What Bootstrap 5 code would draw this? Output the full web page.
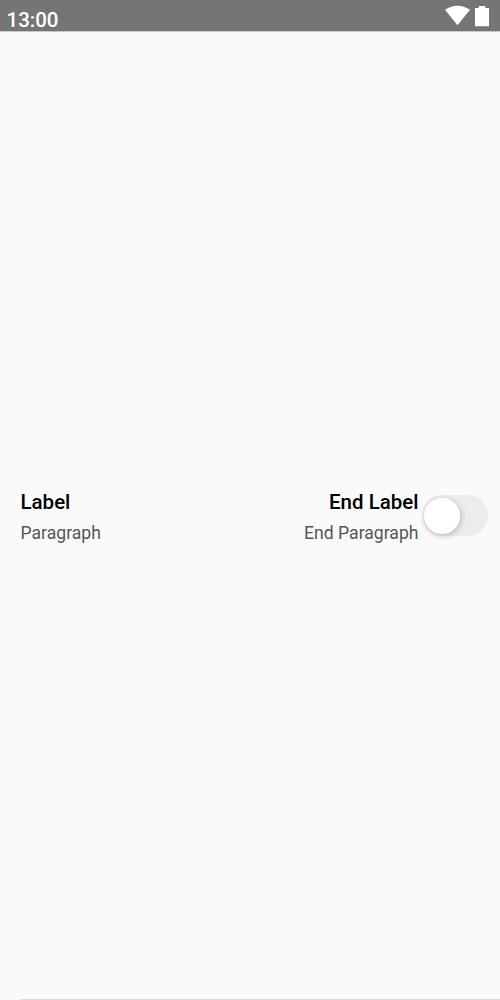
<!DOCTYPE html>
<html lang="en">
<head>
<meta charset="utf-8">
<meta name="viewport" content="width=device-width, initial-scale=1">
<title>List item</title>
<link href="https://cdn.jsdelivr.net/npm/bootstrap@5.3.0/dist/css/bootstrap.min.css" rel="stylesheet">
<style>
body{font-family:Roboto,sans-serif;background:#fafafa;color:#000}
.status-bar{height:31px;background:#757575;color:#fff;padding:8px 10px 0 6.5px;box-shadow:0 1px 0 #c8c8c8}
.status-icons{margin-top:-3px}
.clock{font-size:20.5px;line-height:24px;font-weight:500}
.item{padding:0 12.5px 0 20.5px}
.item-copy{padding-top:2px}
.item-title{font-size:20.5px;line-height:28px;font-weight:500}
.item-text{font-size:17.6px;line-height:24px;color:#555;margin-top:5px}
.toggle{width:66px;height:41px;border-radius:21px;background:#ececec;padding:3px 2.4px;margin-left:3px}
.knob{width:36px;height:36px;border-radius:50%;background:#fff;box-shadow:1px 2px 6px rgba(0,0,0,.22)}
.divider{height:1px;margin-left:20px;background:#dcdcdc}
</style>
</head>
<body class="vh-100 d-flex flex-column overflow-hidden">
<header class="status-bar d-flex justify-content-between flex-shrink-0">
<span class="clock">13:00</span>
<svg class="status-icons" width="46" height="22" viewBox="444 5 46 22" fill="#fff"><path d="M445 9.700Q457.500 1.800 470 9.700L457.500 25.300Z"/><path d="M475 8h3.800V6h6.400v2h3.800v18.300h-14z"/></svg>
</header>
<main class="flex-grow-1 d-flex align-items-center">
<div class="item w-100 d-flex align-items-center justify-content-between">
<div class="item-copy"><div class="item-title">Label</div><div class="item-text">Paragraph</div></div>
<div class="d-flex align-items-center">
<div class="item-copy text-end"><div class="item-title">End Label</div><div class="item-text">End Paragraph</div></div>
<div class="toggle" role="switch" aria-checked="false"><div class="knob"></div></div>
</div>
</div>
</main>
<div class="divider flex-shrink-0"></div>
<script src="https://cdn.jsdelivr.net/npm/bootstrap@5.3.0/dist/js/bootstrap.bundle.min.js"></script>
</body>
</html>
